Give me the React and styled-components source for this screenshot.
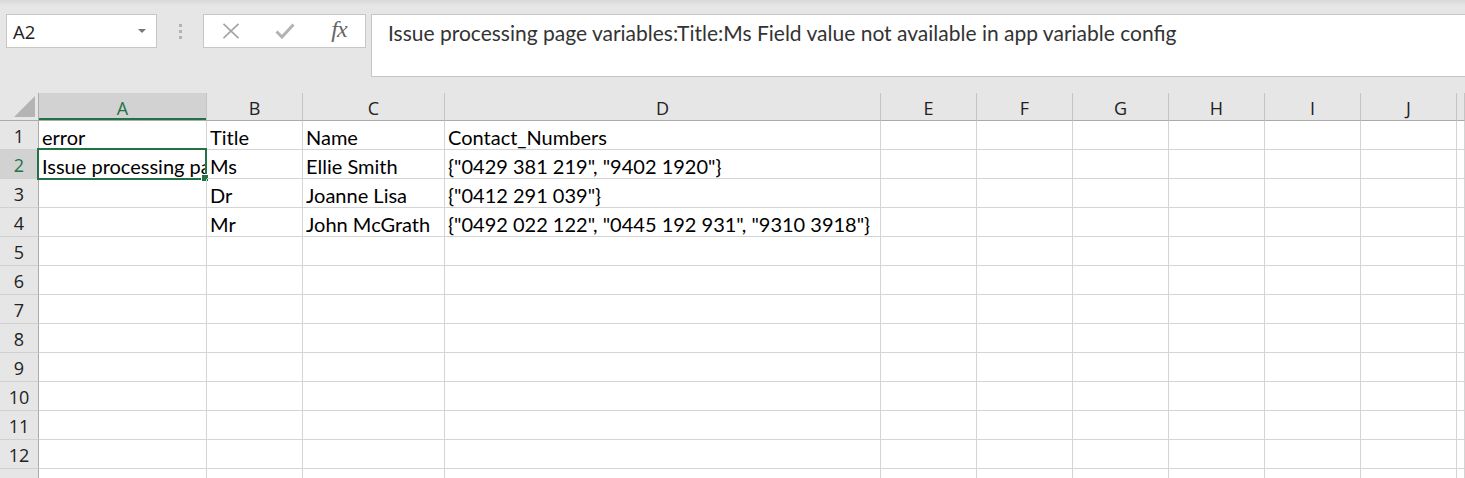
import React from 'react';
import styled, { createGlobalStyle, css } from 'styled-components';

const GREEN = '#217346';
const cellFont = `'Lato', 'Liberation Sans', sans-serif`;
const uiFont = `'Open Sans', 'Noto Sans', sans-serif`;

const GlobalStyle = createGlobalStyle`
	html, body {
		margin: 0;
		padding: 0;
		background: #e6e6e6;
		overflow: hidden;
	}
	* {
		box-sizing: border-box;
	}
`;

const columns = [
	{ key: 'A', width: 168 },
	{ key: 'B', width: 96 },
	{ key: 'C', width: 142 },
	{ key: 'D', width: 436 },
	{ key: 'E', width: 96 },
	{ key: 'F', width: 96 },
	{ key: 'G', width: 96 },
	{ key: 'H', width: 96 },
	{ key: 'I', width: 96 },
	{ key: 'J', width: 96 },
];

const errorText =
	'Issue processing page variables:Title:Ms Field value not available in app variable config';

const data = [
	['error', 'Title', 'Name', 'Contact_Numbers'],
	[errorText, 'Ms', 'Ellie Smith', '{"0429 381 219", "9402 1920"}'],
	['', 'Dr', 'Joanne Lisa', '{"0412 291 039"}'],
	['', 'Mr', 'John McGrath', '{"0492 022 122", "0445 192 931", "9310 3918"}'],
];

// 12 full rows visible, the 13th is cut by the window bottom
const ROW_COUNT = 13;

const App = () => {
	return (
		<Page>
			<GlobalStyle />
			<FormulaBar>
				<NameBox>
					<span>A2</span>
					<Caret />
				</NameBox>
				<Grip>
					<i />
					<i />
					<i />
				</Grip>
				<FuncButtons>
					<FuncButton>
						<svg width='18' height='16' viewBox='0 0 18 16'>
							<path
								d='M1.5 0.8 L16.5 15.2 M16.5 0.8 L1.5 15.2'
								stroke='#a3a3a3'
								strokeWidth='1.6'
								fill='none'
							/>
						</svg>
					</FuncButton>
					<FuncButton>
						<svg width='20' height='16' viewBox='0 0 20 16'>
							<path
								d='M1.5 8.5 L7 14 L18.5 1.5'
								stroke='#b3b3b3'
								strokeWidth='3'
								fill='none'
							/>
						</svg>
					</FuncButton>
					<FuncButton>
						<Fx>fx</Fx>
					</FuncButton>
				</FuncButtons>
				<FormulaInput>{errorText}</FormulaInput>
			</FormulaBar>

			<Sheet>
				<Corner>
					<svg width='21' height='21' viewBox='0 0 21 21'>
						<path d='M21 0 L21 21 L0 21 Z' fill='#b4b4b4' />
					</svg>
				</Corner>
				{columns.map((col) => (
					<ColHeader key={col.key} $selected={col.key === 'A'}>
						{col.key}
					</ColHeader>
				))}
				<ColHeader />

				{Array.from({ length: ROW_COUNT }).map((_, r) => {
					const row = data[r] || [];
					const last = r === ROW_COUNT - 1;
					return (
						<React.Fragment key={r}>
							<RowHeader $selected={r === 1}>{last ? '' : r + 1}</RowHeader>
							{columns.map((col, c) => (
								<Cell key={col.key}>
									{row[c] && <Value>{row[c]}</Value>}
									{r === 1 && c === 0 && (
										<Selection>
											<FillHandle />
										</Selection>
									)}
								</Cell>
							))}
							<Cell />
						</React.Fragment>
					);
				})}
			</Sheet>
		</Page>
	);
};

const Page = styled.div`
	height: 100vh;
	display: flex;
	flex-direction: column;
	overflow: hidden;
	background: linear-gradient(#d9d9d9 0px, #e6e6e6 6px, #e6e6e6 100%);
`;

const FormulaBar = styled.div`
	display: flex;
	align-items: flex-start;
	height: 93px;
	padding: 14px 0 0 6px;
	flex-shrink: 0;
`;

const NameBox = styled.div`
	width: 151px;
	height: 34px;
	background: #fff;
	border: 1px solid #c6c6c6;
	display: flex;
	align-items: center;
	justify-content: space-between;
	padding: 0 10px 0 6px;
	font-family: ${uiFont};
	font-size: 18.5px;
	color: #222;
`;

const Caret = styled.span`
	width: 0;
	height: 0;
	border-left: 4px solid transparent;
	border-right: 4px solid transparent;
	border-top: 4px solid #777;
`;

const Grip = styled.div`
	width: 46px;
	height: 34px;
	display: flex;
	flex-direction: column;
	align-items: center;
	justify-content: center;
	gap: 3px;
	i {
		display: block;
		width: 3px;
		height: 3px;
		background: #b3b3b3;
	}
`;

const FuncButtons = styled.div`
	width: 163px;
	height: 34px;
	background: #fff;
	border: 1px solid #c6c6c6;
	display: grid;
	grid-template-columns: 54px 54px 54px;
	align-items: center;
`;

const FuncButton = styled.div`
	display: flex;
	align-items: center;
	justify-content: center;
	height: 100%;
`;

const Fx = styled.span`
	font-family: 'Liberation Serif', 'DejaVu Serif', serif;
	font-style: italic;
	font-size: 24px;
	color: #666;
	letter-spacing: -1px;
	margin-top: -3px;
`;

const FormulaInput = styled.div`
	flex: 1;
	height: 63px;
	margin-left: 5px;
	background: #fff;
	border: 1px solid #c6c6c6;
	border-right: none;
	padding: 5px 16px;
	font-family: ${cellFont};
	font-size: 21px;
	color: #333;
	white-space: nowrap;
	overflow: hidden;
`;

const Sheet = styled.div`
	display: grid;
	grid-template-columns: 39px ${columns.map((c) => `${c.width}px`).join(' ')} 1fr;
	grid-template-rows: 28px;
	grid-auto-rows: 29px;
	background: #fff;
`;

const headerBase = css`
	background: #e6e6e6;
	font-family: ${uiFont};
	font-size: 18px;
	color: #222;
	display: flex;
	align-items: center;
	justify-content: center;
`;

const Corner = styled.div`
	${headerBase};
	border-right: 1px solid #ababab;
	border-bottom: 1px solid #ababab;
	justify-content: flex-end;
	align-items: flex-end;
	padding: 0 3px 3px 0;
`;

const ColHeader = styled.div`
	${headerBase};
	padding-top: 2px;
	border-right: 1px solid #c4c4c4;
	border-bottom: 1px solid #ababab;
	${(p) =>
		p.$selected &&
		css`
			background: #d2d2d2;
			color: ${GREEN};
			box-shadow: inset 0 -2px 0 ${GREEN};
		`}
`;

const RowHeader = styled.div`
	${headerBase};
	padding-top: 2px;
	border-right: 1px solid #ababab;
	border-bottom: 1px solid #d0d0d0;
	${(p) =>
		p.$selected &&
		css`
			background: #d2d2d2;
			color: ${GREEN};
			border-right-color: ${GREEN};
		`}
`;

const Cell = styled.div`
	position: relative;
	border-right: 1px solid #d4d4d4;
	border-bottom: 1px solid #d4d4d4;
	padding: 0 0 0 3px;
	display: flex;
	align-items: flex-end;
	min-width: 0;
	font-family: ${cellFont};
	font-size: 20px;
	color: #000;
`;

const Value = styled.span`
	display: block;
	width: 100%;
	white-space: nowrap;
	overflow: hidden;
`;

const Selection = styled.div`
	position: absolute;
	top: -2px;
	left: -2px;
	right: -1px;
	bottom: -2px;
	border: 2px solid ${GREEN};
	pointer-events: none;
`;

const FillHandle = styled.div`
	position: absolute;
	right: -4px;
	bottom: -4px;
	width: 6px;
	height: 6px;
	background: ${GREEN};
	border: 1px solid #fff;
	box-sizing: content-box;
`;

export default App;
